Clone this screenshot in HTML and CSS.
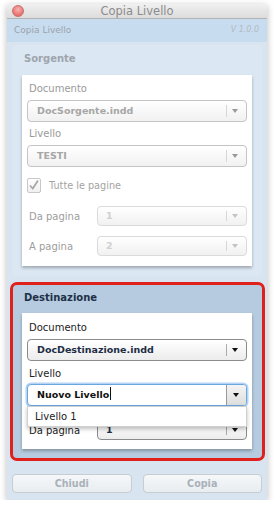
FILE: index.html
```html
<!DOCTYPE html>
<html>
<head>
<meta charset="utf-8">
<link rel="stylesheet" href="styles.css">
</head>
<body>
<div class="window">
  <div class="titlebar">
    <span class="close"></span>
    <span class="title">Copia Livello</span>
  </div>
  <div class="body">
    <div class="header">
      <span class="app">Copia Livello</span>
      <span class="ver">V 1.0.0</span>
    </div>
    <div class="panel src">
      <div class="ptitle">Sorgente</div>
      <div class="box">
        <div class="label l1">Documento</div>
        <div class="select"><span class="val">DocSorgente.indd</span><span class="arrow"></span></div>
        <div class="label l2">Livello</div>
        <div class="select"><span class="val">TESTI</span><span class="arrow"></span></div>
        <div class="check-row">
          <span class="checkbox"><svg width="12" height="12" viewBox="0 0 12 12"><path d="M2 6.5 L4.8 9.5 L10 1.5" fill="none" stroke="#a8a8a8" stroke-width="1.8"/></svg></span>
          <span class="check-label">Tutte le pagine</span>
        </div>
        <div class="row r1">
          <span class="rlabel">Da pagina</span>
          <div class="select small faint"><span class="val">1</span><span class="arrow"></span></div>
        </div>
        <div class="row r2">
          <span class="rlabel">A pagina</span>
          <div class="select small faint"><span class="val">2</span><span class="arrow"></span></div>
        </div>
      </div>
    </div>
    <div class="panel dst">
      <div class="ptitle">Destinazione</div>
      <div class="box">
        <div class="label l1">Documento</div>
        <div class="select"><span class="val">DocDestinazione.indd</span><span class="arrow"></span></div>
        <div class="label l2">Livello</div>
        <div class="combo-wrap">
          <div class="combo"><span class="val">Nuovo Livello<span class="caret"></span></span><span class="arrow"></span></div>
          <div class="list"><div class="item">Livello 1</div></div>
        </div>
        <div class="row r3">
          <span class="rlabel">Da pagina</span>
          <div class="select small"><span class="val">1</span><span class="arrow"></span></div>
        </div>
      </div>
    </div>
    <div class="buttons">
      <div class="btn">Chiudi</div>
      <div class="btn">Copia</div>
    </div>
  </div>
</div>
</body>
</html>
```
FILE: styles.css
```css
* { box-sizing: border-box; }
html, body { margin: 0; padding: 0; background: #ffffff; }
body { font-family: "DejaVu Sans", Verdana, sans-serif; font-size: 10px; }

.window {
  margin: 4px 7px 0 7px;
  width: 260px;
  height: 496px;
  background: #d8e4ef;
  box-shadow: 0 2px 7px rgba(0,0,0,0.28);
  display: flex;
  flex-direction: column;
}

.titlebar {
  height: 15px;
  background: linear-gradient(#f0f0f0, #dcdcdc);
  border-bottom: 1px solid #b3b3b3;
  position: relative;
  display: flex;
  align-items: center;
  justify-content: center;
}
.close {
  position: absolute;
  left: 5px;
  top: 1px;
  width: 12px;
  height: 12px;
  border-radius: 50%;
  background: radial-gradient(circle at 50% 35%, #f8b3b3, #e8716d 70%, #d45c58);
  border: 1px solid #c9706c;
}
.title {
  font-size: 11.5px;
  color: #8c8c8c;
  line-height: 15px;
}

.body {
  flex: 1;
  display: flex;
  flex-direction: column;
}

.header {
  height: 23px;
  background: #c8dcf0;
  display: flex;
  align-items: center;
  justify-content: space-between;
  padding: 0 8px 2px 7px;
}
.app { font-size: 9px; color: #9aa3ab; }
.ver { font-size: 8px; font-style: italic; color: #b2bac2; }

.panel {
  border-radius: 5px;
}
.panel.src {
  margin: 3px 5px 0 5px;
  background: #dbe7f3;
  padding-bottom: 10px;
}
.panel.src .ptitle {
  height: 30px;
  line-height: 28px;
  padding-left: 12px;
  font-weight: bold;
  color: #9ea5ac;
}
.panel.dst {
  margin: 6px 2px 0 3px;
  background: #b6cbdf;
  border: 3px solid #e0211b;
  border-radius: 7px;
  padding: 0 10px 9px 9px;
}
.panel.dst .ptitle {
  height: 28px;
  line-height: 26px;
  padding-left: 2px;
  font-weight: bold;
  color: #1d3048;
}

.box {
  background: #ffffff;
  box-shadow: 0 2px 3px rgba(0,0,0,0.28);
  display: flex;
  flex-direction: column;
  padding: 7px 5px 10px 5px;
}
.panel.src .box { margin: 0 10px; }
.panel.dst .box { padding: 8px 5px 9px 5px; }

.label {
  height: 13px;
  line-height: 13px;
  padding-left: 2px;
  color: #9a9a9a;
}
.src .label.l1 { margin-bottom: 5px; }
.src .label.l2 { margin-top: 5px; margin-bottom: 5px; }
.dst .label { color: #222; }
.dst .label.l1 { margin-bottom: 5px; }
.dst .label.l2 { margin-top: 6px; margin-bottom: 4px; }

.select {
  display: flex;
  height: 22px;
  border: 1px solid #c4c4c4;
  border-radius: 4px;
  background: linear-gradient(#ffffff, #f1f1f1);
}
.select .val {
  flex: 1;
  line-height: 20px;
  padding-left: 9px;
  font-size: 9.5px;
  font-weight: bold;
  color: #a6a6a6;
}
.arrow {
  width: 20px;
  position: relative;
}
.select .arrow::before {
  content: "";
  position: absolute;
  left: 0;
  top: 4px;
  bottom: 4px;
  border-left: 1px solid #d6d6d6;
}
.arrow::after {
  content: "";
  position: absolute;
  left: 6px;
  top: 8px;
  border-left: 3.5px solid transparent;
  border-right: 3.5px solid transparent;
  border-top: 4px solid #9a9a9a;
}
.select.small { height: 20px; flex: 1; }
.select.small .val { line-height: 18px; padding-left: 8px; }
.select.small .arrow::after { top: 7px; }
.select.faint { border-color: #dadada; }
.select.faint .val { color: #d0d0d0; }
.select.faint .arrow::after { border-top-color: #c4c4c4; }

.dst .select { border-color: #8b8b8b; background: linear-gradient(#ffffff, #ececec); }
.dst .select .val { color: #1d2d45; }
.dst .select .arrow::before { border-left-color: #aaa; }
.dst .arrow::after { border-top-color: #111; }

.check-row {
  display: flex;
  align-items: center;
  margin-top: 11px;
  height: 15px;
}
.checkbox {
  width: 14px;
  height: 15px;
  border: 1px solid #c8c8c8;
  border-radius: 2px;
  background: linear-gradient(#fff, #f0f0f0);
  display: flex;
  align-items: center;
  justify-content: center;
  padding-bottom: 2px;
}
.check-label {
  margin-left: 8px;
  color: #a3a3a3;
  font-size: 9.7px;
}

.row {
  display: flex;
  align-items: center;
}
.row.r1 { margin-top: 13px; }
.row.r2 { margin-top: 10px; }
.rlabel {
  width: 70px;
  padding-left: 2px;
  color: #9d9d9d;
}
.dst .rlabel { color: #222; }

.combo-wrap {
  position: relative;
}
.combo {
  display: flex;
  height: 22px;
  border: 1px solid #6aa6e0;
  border-radius: 4px;
  box-shadow: 0 0 0 1.5px rgba(120,175,235,0.55);
  background: #fff;
}
.combo .val {
  flex: 1;
  line-height: 20px;
  padding-left: 9px;
  font-size: 9.5px;
  font-weight: bold;
  color: #111;
}
.caret {
  display: inline-block;
  width: 1px;
  height: 13px;
  background: #111;
  vertical-align: -2px;
  margin-left: 1px;
}
.combo .arrow {
  background: linear-gradient(#f4f4f4, #dedede);
  border-left: 1px solid #999;
  border-radius: 0 3px 3px 0;
}
.combo .arrow::after { top: 8px; }

.list {
  position: absolute;
  left: 0;
  right: 0;
  top: 22px;
  height: 21px;
  background: #fff;
  border: 1px solid #d0d0d0;
  box-shadow: 0 2px 4px rgba(0,0,0,0.25);
  z-index: 2;
}
.item {
  line-height: 19px;
  padding-left: 7px;
  color: #222;
}
.row.r3 { margin-top: 14px; }
.row.r3 .rlabel { color: #222; }

.buttons {
  display: flex;
  gap: 11px;
  padding: 0 5px;
  margin-top: 13px;
}
.btn {
  flex: 1;
  height: 19px;
  border: 1px solid #c6cdd3;
  border-radius: 4px;
  background: linear-gradient(#f5f7f9, #e9edf0);
  text-align: center;
  line-height: 17px;
  font-weight: bold;
  font-size: 9.6px;
  color: #a9b1b9;
}
```
